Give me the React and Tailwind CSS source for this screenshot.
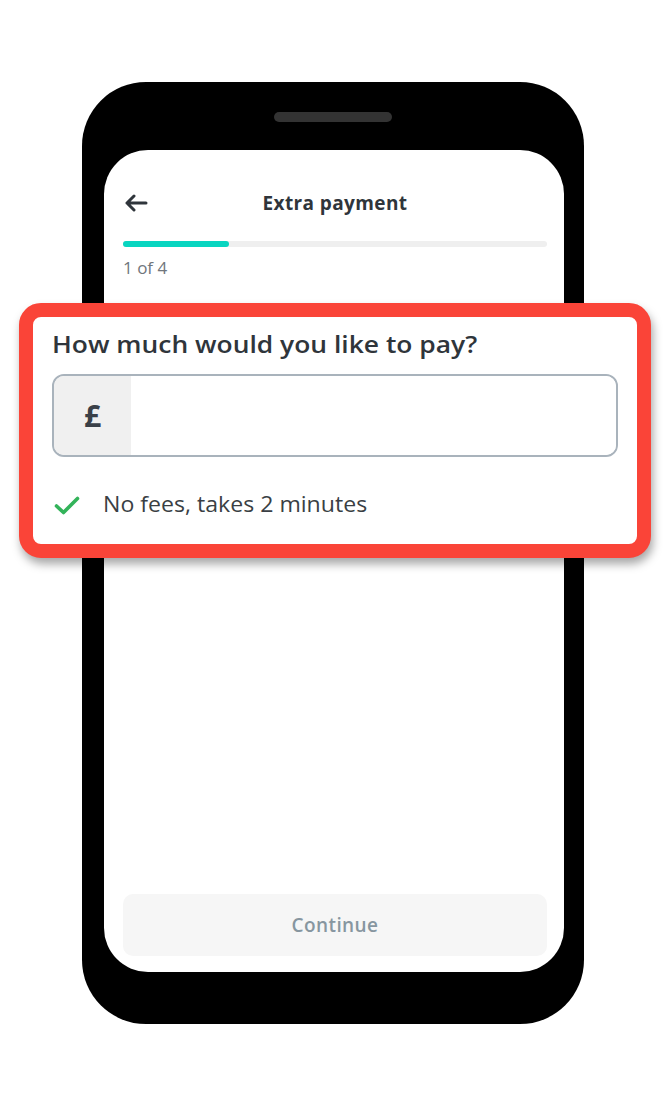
import React from 'react';

const BackArrow = () => (
  <svg width="24" height="18" viewBox="0 0 24 18" fill="none">
    <path d="M22 9H3M10 2L3 9l7 7" stroke="#2f353b" strokeWidth="3" strokeLinecap="round" strokeLinejoin="round" />
  </svg>
);

const Check = () => (
  <svg width="26" height="19" viewBox="0 0 26 19" fill="none">
    <path d="M2.5 10l7 6.5L23.5 2.5" stroke="#33b35a" strokeWidth="3.6" strokeLinecap="round" strokeLinejoin="round" />
  </svg>
);

const App = () => {
  return (
    <div className="relative w-[668px] h-[1104px] bg-white font-['Open_Sans',sans-serif] pt-[82px] pl-[82px]">
      {/* phone */}
      <div className="w-[502px] h-[942px] bg-black rounded-[64px] pt-[30px]">
        <div className="mx-auto w-[118px] h-[10px] rounded-full bg-[#333333]" />
        <div className="mt-[28px] ml-[22px] w-[460px] h-[822px] bg-white rounded-[44px] flex flex-col pl-[19px] pr-[17px]">
          <div className="mt-[40px] h-[26px] grid grid-cols-[1fr_auto_1fr] items-center">
            <div className="pl-[1px] flex items-center">
              <BackArrow />
            </div>
            <div className="text-[19px] font-bold tracking-[0.4px] text-[#2f353b] leading-[26px]">Extra payment</div>
            <div />
          </div>
          <div className="mt-[25px] h-[6px] rounded-full bg-[#efefef]">
            <div className="h-full w-[106px] rounded-full bg-[#08d5c0]" />
          </div>
          <div className="mt-[10px] text-[17px] leading-[22px] text-[#70767c]">1 of 4</div>

          <button className="mt-auto mb-[16px] h-[62px] w-full rounded-[10px] bg-[#f6f6f6] text-[19px] tracking-[0.4px] text-[#8796a0] font-semibold">
            Continue
          </button>
        </div>
      </div>

      {/* highlighted card over the phone */}
      <div className="absolute left-[19px] top-[303px] w-[632px] h-[255px] rounded-[22px] border-[14px] border-[#fa4438] bg-white shadow-[2px_6px_10px_rgba(0,0,0,0.35)] px-[19px] pt-[11px]">
        <h2 className="origin-left scale-x-[1.1] text-[24px] leading-[32px] font-semibold text-[#2f353b] whitespace-nowrap">How much would you like to pay?</h2>
        <div className="mt-[14px] h-[83px] flex rounded-[12px] border-2 border-[#a9b3bc] overflow-hidden">
          <div className="w-[77px] bg-[#f0f0f0] flex items-center justify-center text-[30px] font-bold text-[#3a4048]">£</div>
          <div className="flex-1 bg-white" />
        </div>
        <div className="mt-[34px] h-[28px] flex items-center">
          <div className="w-[51px] pl-[2px] flex items-center">
            <Check />
          </div>
          <span className="origin-left scale-x-[1.1] text-[21px] text-[#3a3f44] whitespace-nowrap">No fees, takes 2 minutes</span>
        </div>
      </div>
    </div>
  );
};

export default App;
